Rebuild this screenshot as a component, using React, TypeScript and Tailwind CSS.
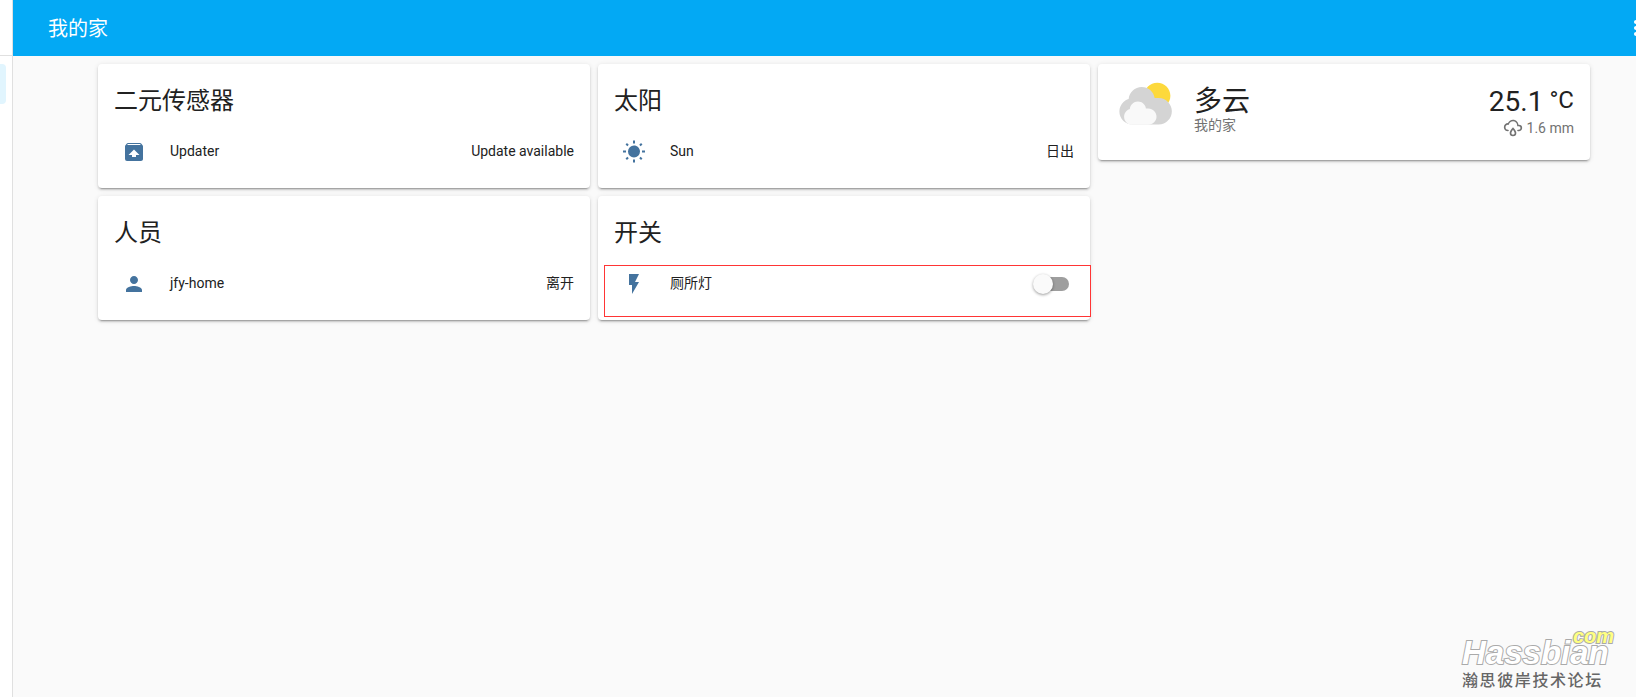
import { useState } from 'react';
import type { ReactNode } from 'react';
import { MdFlashOn, MdMoreVert, MdPerson, MdUnarchive } from 'react-icons/md';

const SunIcon = () => (
  <svg viewBox="0 0 24 24" className="size-6" fill="currentColor" aria-hidden="true">
    <path d="M3.55,18.54L4.96,19.95L6.76,18.16L5.34,16.74M11,22.45C11.32,22.45 13,22.45 13,22.45V19.5H11M12,5.5A6,6 0 0,0 6,11.5A6,6 0 0,0 12,17.5A6,6 0 0,0 18,11.5C18,8.18 15.31,5.5 12,5.5M20,12.5H23V10.5H20M17.24,18.16L19.04,19.95L20.45,18.54L18.66,16.74M20.45,4.46L19.04,3.05L17.24,4.84L18.66,6.26M13,0.55H11V3.5H13M4,10.5H1V12.5H4M6.76,4.84L4.96,3.05L3.55,4.46L5.34,6.26L6.76,4.84Z" />
  </svg>
);

const RainIcon = () => (
  <svg viewBox="0 0 24 24" className="size-5" fill="currentColor" aria-hidden="true">
    <path d="M6,14.03A1,1 0 0,1 7,15.03C7,15.58 6.55,16.03 6,16.03C3.24,16.03 1,13.79 1,11.03C1,8.27 3.24,6.03 6,6.03C7,3.68 9.3,2.03 12,2.03C15.43,2.03 18.24,4.69 18.5,8.06L19,8.03A4,4 0 0,1 23,12.03C23,14.23 21.21,16.03 19,16.03H18C17.45,16.03 17,15.58 17,15.03C17,14.47 17.45,14.03 18,14.03H19A2,2 0 0,0 21,12.03A2,2 0 0,0 19,10.03H17V9.03C17,6.27 14.76,4.03 12,4.03C9.5,4.03 7.45,5.84 7.06,8.21C6.73,8.09 6.37,8.03 6,8.03A3,3 0 0,0 3,11.03A3,3 0 0,0 6,14.03M12,14.15C12.18,14.39 12.37,14.66 12.56,14.94C13,15.56 14,17.03 14,18C14,19.11 13.1,20 12,20A2,2 0 0,1 10,18C10,17.03 11,15.56 11.44,14.94C11.63,14.66 11.82,14.4 12,14.15M12,11.03L11.5,11.59C11.5,11.59 10.65,12.55 9.79,13.81C8.93,15.06 8,16.56 8,18A4,4 0 0,0 12,22A4,4 0 0,0 16,18C16,16.56 15.07,15.06 14.21,13.81C13.35,12.55 12.5,11.59 12.5,11.59" />
  </svg>
);

const PartlyCloudyIcon = () => (
  <svg viewBox="0 0 17 17" className="size-16 shrink-0" aria-hidden="true">
    <path fill="#fdd93c" d="m14.981 4.2112c0 1.9244-1.56 3.4844-3.484 3.4844-1.9244 0-3.4844-1.56-3.4844-3.4844s1.56-3.484 3.4844-3.484c1.924 0 3.484 1.5596 3.484 3.484" />
    <path fill="#d4d4d4" d="m3.8863 5.035c-0.54892 0.16898-1.04 0.46637-1.4372 0.8636-0.63077 0.63041-1.0206 1.4933-1.0206 2.455 0 1.9251 1.5589 3.4682 3.4837 3.4682h6.9688c1.9251 0 3.484-1.5981 3.484-3.5232 0-1.9251-1.5589-3.5232-3.484-3.5232h-1.0834c-0.25294-1.6916-1.6986-2.9083-3.4463-2.9083-1.7995 0-3.2805 1.4153-3.465 3.1679" />
    <path fill="#f9f9f9" d="m4.1996 7.6995c-0.33902 0.10407-0.64276 0.28787-0.88794 0.5334-0.39017 0.38982-0.63147 0.92322-0.63147 1.5176 0 1.1896 0.96414 2.1431 2.1537 2.1431h4.3071c1.1896 0 2.153-0.98742 2.153-2.1777 0-1.1896-0.96344-2.1777-2.153-2.1777h-0.66992c-0.15593-1.0449-1.0499-1.7974-2.1297-1.7974-1.112 0-2.0274 0.87524-2.1417 1.9586" />
  </svg>
);

const Card = ({ children }: { children: ReactNode }) => (
  <section className="rounded bg-white shadow-[0_2px_2px_0_rgba(0,0,0,0.14),0_1px_5px_0_rgba(0,0,0,0.12),0_3px_1px_-2px_rgba(0,0,0,0.2)]">{children}</section>
);

const EntityCard = ({ title, children }: { title: string; children: ReactNode }) => (
  <Card>
    <h2 className="px-4 pt-[13px] pb-[7px] text-2xl leading-[48px]">{title}</h2>
    <div className="px-4 pb-4">{children}</div>
  </Card>
);

const EntityRow = ({ icon, name, children }: { icon: ReactNode; name: ReactNode; children: ReactNode }) => (
  <div className="flex h-10 items-center text-sm">
    <span className="flex size-10 items-center justify-center text-[#44739e]">{icon}</span>
    <span className="ml-4 flex-1 pb-0.5">{name}</span>
    {typeof children === 'string' ? <span className="pb-0.5">{children}</span> : children}
  </div>
);

export default function App() {
  const [lightOn, setLightOn] = useState(false);

  return (
    <div className="relative flex min-h-screen overflow-hidden bg-[#fafafa] font-[Roboto,'Noto_Sans_CJK_SC',sans-serif] text-[#212121]">
      <aside className="w-[13px] shrink-0 border-r border-[#e0e0e0] bg-white">
        <div className="h-14 border-b border-[#e0e0e0]" />
        <div className="mt-2 mr-1.5 h-10 rounded-r bg-[#e1f5fe]" />
      </aside>

      <div className="min-w-0 flex-1">
        <header className="flex h-14 items-center justify-between overflow-hidden bg-[#03a9f4] pl-[35px] text-white">
          <h1 className="pt-0.5 text-xl">我的家</h1>
          <button type="button" aria-label="菜单" className="-mr-3 shrink-0"><MdMoreVert size={24} /></button>
        </header>

        <main className="grid grid-cols-3 items-start gap-2 pt-2 pr-[46px] pl-[85px]">
          <div className="flex flex-col gap-2">
            <EntityCard title="二元传感器">
              <EntityRow icon={<MdUnarchive size={24} />} name="Updater">Update available</EntityRow>
            </EntityCard>
            <EntityCard title="人员">
              <EntityRow icon={<MdPerson size={24} />} name="jfy-home">离开</EntityRow>
            </EntityCard>
          </div>

          <div className="flex flex-col gap-2">
            <EntityCard title="太阳">
              <EntityRow icon={<SunIcon />} name="Sun">日出</EntityRow>
            </EntityCard>
            <div className="relative">
              <EntityCard title="开关">
                <EntityRow icon={<MdFlashOn size={24} />} name={<label htmlFor="light">厕所灯</label>}>
                  <span className="relative mr-[5px] flex h-5 w-9 items-center">
                    <input
                      id="light"
                      type="checkbox"
                      role="switch"
                      checked={lightOn}
                      onChange={(e) => setLightOn(e.target.checked)}
                      className="peer ml-px h-3.5 w-full appearance-none rounded-full bg-[#9e9e9e] checked:bg-[#81d4fa]"
                    />
                    <span className="pointer-events-none absolute left-0 size-5 rounded-full bg-[#fafafa] shadow-[0_1px_3px_rgba(0,0,0,0.4)] peer-checked:left-4 peer-checked:bg-[#03a9f4]" />
                  </span>
                </EntityRow>
              </EntityCard>
              <div className="pointer-events-none absolute -right-px bottom-[3px] left-1.5 h-[52px] border border-[#ff3535]" />
            </div>
          </div>

          <Card>
            <div className="flex h-24 items-start p-4">
              <PartlyCloudyIcon />
              <div className="ml-4 flex-1 pt-1.5">
                <div className="text-[28px] leading-8">多云</div>
                <div className="text-sm leading-[14px] text-[#727272]">我的家</div>
              </div>
              <div className="flex flex-col items-end pt-1.5">
                <div className="flex text-[28px] leading-8">
                  25.1<span className="ml-1.5 text-2xl leading-7">°C</span>
                </div>
                <div className="flex items-center gap-1 text-sm leading-5 text-[#727272]"><RainIcon />1.6 mm</div>
              </div>
            </div>
          </Card>
        </main>
      </div>

      <div className="pointer-events-none absolute right-4 bottom-1 flex w-40 flex-col">
        <svg viewBox="0 0 160 52" className="h-[52px] w-full" fontFamily="Liberation Sans, Arial, sans-serif" fontWeight="bold" fontStyle="italic" strokeWidth="2" paintOrder="stroke">
          <text x="2" y="43" fontSize="33" fill="#fff" stroke="#aaa">Hassbian</text>
          <text x="113" y="22" fontSize="20" fill="#ffff80" stroke="#aaa">com</text>
        </svg>
        <p className="-mt-1 pl-0.5 text-base leading-6 font-medium tracking-widest text-[#666]">瀚思彼岸技术论坛</p>
      </div>
    </div>
  );
}
